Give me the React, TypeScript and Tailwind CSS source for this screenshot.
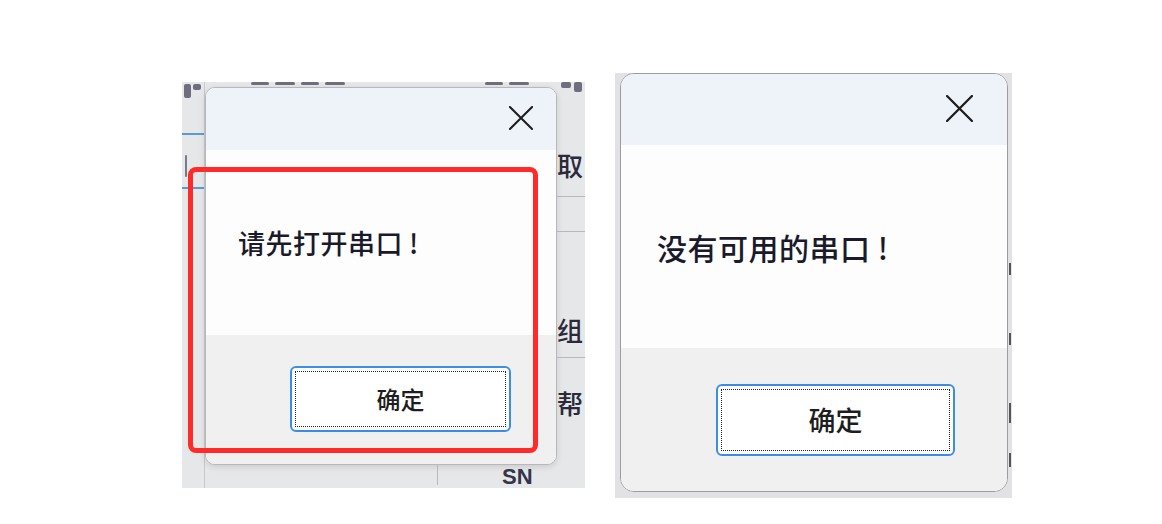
import React from "react";

const cjk = { fontFamily: '"Noto Sans CJK SC", "Noto Sans", sans-serif' };

const CloseX = ({ size }: { size: number }) => (
  <svg width={size} height={size} viewBox="0 0 26 26" fill="none">
    <path d="M1 1L25 25M25 1L1 25" stroke="#1d1d1f" strokeWidth="2.2" strokeLinecap="round" />
  </svg>
);

const OkButton = ({ className, textClass }: { className: string; textClass: string }) => (
  <div className={`flex rounded-[6px] border-2 border-[#3a8ee6] bg-white p-[3px] ${className}`}>
    <div className="flex flex-1 items-center justify-center border border-dotted border-[#222]">
      <span className={`text-[#1e1e1e] ${textClass}`} style={cjk}>
        确定
      </span>
    </div>
  </div>
);

// smudges of the window behind the dialog (too cut off to read)
const Smudge = ({ className }: { className: string }) => (
  <div className={`rounded-[2px] bg-[#6e6e80] ${className}`} />
);

export default function App() {
  return (
    <div className="flex h-[524px] w-[1162px] items-start bg-white pl-[182px]" style={cjk}>
      {/* left: dialog on top of the app window, with red highlight */}
      <div className="relative mt-[82px] flex h-[406px] w-[403px] overflow-hidden bg-[#e6e7e9]">
        {/* left strip of the window behind */}
        <div className="flex w-[23px] flex-col border-r border-[#c9c9cc]">
          <div className="mt-[2px] flex gap-[2px] pl-[2px]">
            <Smudge className="h-[14px] w-[7px]" />
            <Smudge className="h-[6px] w-[8px]" />
          </div>
          <div className="mt-[35px] h-[2px] bg-[#5b9bd5]" />
          <div className="mt-[20px] ml-[3px] h-[22px] w-[2px] rounded bg-[#7a7a8a]" />
          <div className="mt-[10px] h-[2px] bg-[#5b9bd5]" />
        </div>

        {/* middle: dialog with strips above and below */}
        <div className="flex w-[352px] flex-col">
          <div className="flex h-[5px] items-start gap-[70px] pl-[46px]">
            <div className="flex gap-[6px]">
              <Smudge className="h-[3px] w-[18px]" />
              <Smudge className="h-[3px] w-[20px]" />
              <Smudge className="h-[3px] w-[18px]" />
              <Smudge className="h-[3px] w-[20px]" />
            </div>
            <div className="ml-[70px] flex gap-[6px]">
              <Smudge className="h-[3px] w-[18px]" />
              <Smudge className="h-[3px] w-[20px]" />
            </div>
          </div>
          <div className="flex h-[378px] flex-col overflow-hidden rounded-[10px] border border-[#b8b8bc] bg-white shadow-[0_2px_6px_rgba(0,0,0,0.12)]">
            <div className="flex h-[62px] items-start justify-end bg-[#eef2f9] pr-[23px] pt-[18px]">
              <CloseX size={24} />
            </div>
            <div className="flex h-[185px] items-center bg-[#fdfdfe] pl-[32px]">
              <span className="text-[27px] font-medium leading-none tracking-[0.5px] text-[#1a1a2a]">
                请先打开串口{"\u2009"}!
              </span>
            </div>
            <div className="flex flex-1 items-start bg-[#f0f0f0] pl-[84px] pt-[31px]">
              <OkButton className="h-[66px] w-[221px]" textClass="text-[24px] font-medium" />
            </div>
          </div>
          <div className="flex flex-1 items-end">
            <div className="ml-[232px] h-[20px] w-px self-start bg-[#b9b9bd]" />
            <span
              className="ml-[64px] text-[22px] font-bold leading-[22px] text-[#34344a]"
              style={{ fontFamily: '"Liberation Sans", sans-serif' }}
            >
              SN
            </span>
          </div>
        </div>

        {/* right strip of the window behind */}
        <div className="flex flex-1 flex-col text-[26px] font-medium leading-none text-[#2a2a3a]">
          <div className="ml-[4px] flex gap-[3px]">
            <Smudge className="h-[6px] w-[10px]" />
            <Smudge className="h-[10px] w-[8px]" />
          </div>
          <span className="mt-[60px]">取</span>
          <div className="mt-[18px] h-px bg-[#b9b9bd]" />
          <div className="mt-[34px] h-px bg-[#b9b9bd]" />
          <span className="mt-[85px]">组</span>
          <div className="mt-[14px] h-px bg-[#b9b9bd]" />
          <span className="mt-[32px]">帮</span>
        </div>

        <div className="absolute left-[6px] top-[85px] h-[286px] w-[350px] rounded-[8px] border-[5px] border-[#ff2b2b]" />
      </div>

      {/* right: plain dialog */}
      <div className="ml-[30px] mt-[73px] flex h-[425px] w-[397px] overflow-hidden bg-[#e2e2e4] pl-[5px]">
        <div className="flex h-[419px] w-[388px] flex-col overflow-hidden rounded-[14px] border border-[#9d9da1] bg-white">
          <div className="flex h-[71px] items-start justify-end bg-[#eef3fa] pr-[34px] pt-[21px]">
            <CloseX size={27} />
          </div>
          <div className="flex h-[203px] items-center bg-[#fdfdfe] pl-[36px]">
            <span className="text-[30px] font-medium leading-none tracking-[0.5px] text-[#1a1a2a]">
              没有可用的串口 !
            </span>
          </div>
          <div className="flex flex-1 items-start bg-[#f0f0f0] pl-[95px] pt-[36px]">
            <OkButton className="h-[72px] w-[239px]" textClass="text-[27px] font-medium" />
          </div>
        </div>
        <div className="flex flex-1 flex-col items-center">
          <div className="mt-[190px] h-[12px] w-[2px] bg-[#555]" />
          <div className="mt-[58px] h-[12px] w-[2px] bg-[#555]" />
          <div className="mt-[58px] h-[20px] w-[2px] bg-[#555]" />
          <div className="mt-[30px] h-[14px] w-[2px] bg-[#555]" />
        </div>
      </div>
    </div>
  );
}
